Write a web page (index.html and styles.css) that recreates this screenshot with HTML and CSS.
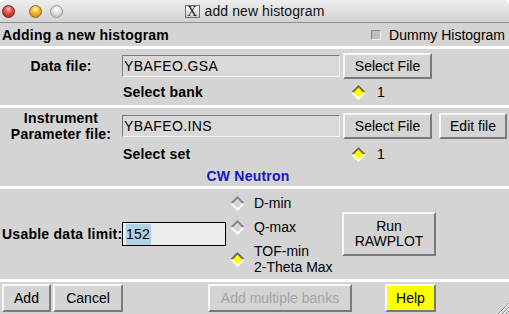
FILE: index.html
```html
<!DOCTYPE html>
<html>
<head>
<meta charset="utf-8">
<title>add new histogram</title>
<link rel="stylesheet" href="styles.css">
</head>
<body>
<div class="window">
  <div class="titlebar">
    <div class="lights">
      <span class="light red"></span>
      <span class="light yellow"></span>
      <span class="light grey"></span>
    </div>
    <div class="title"><span class="xicon">X</span><span>add new histogram</span></div>
    <div></div>
  </div>

  <div class="header">
    <span class="heading">Adding a new histogram</span>
    <span class="check"><span class="box"></span>Dummy Histogram</span>
  </div>

  <div class="sep"></div>

  <div class="files data">
    <div class="lbl">Data file:</div>
    <div class="entry">YBAFEO.GSA</div>
    <div class="btn file-btn">Select File</div>
    <div class="sub">Select bank</div>
    <div class="radio pick">
      <svg viewBox="0 0 16 16"><polygon points="8,1.5 14.5,8 8,14.5 1.5,8" fill="#ffff00"/><polyline points="1.5,8 8,1.5 14.5,8" fill="none" stroke="#6e6a5a" stroke-width="2"/><polyline points="1.5,8 8,14.5 14.5,8" fill="none" stroke="#ffffff" stroke-width="2"/></svg>
      <span class="rtext">1</span>
    </div>
  </div>

  <div class="sep"></div>

  <div class="files inst">
    <div class="lbl">Instrument<br>Parameter file:</div>
    <div class="entry">YBAFEO.INS</div>
    <div class="btn file-btn">Select File</div>
    <div class="btn edit-btn">Edit file</div>
    <div class="sub">Select set</div>
    <div class="radio pick">
      <svg viewBox="0 0 16 16"><polygon points="8,1.5 14.5,8 8,14.5 1.5,8" fill="#ffff00"/><polyline points="1.5,8 8,1.5 14.5,8" fill="none" stroke="#6e6a5a" stroke-width="2"/><polyline points="1.5,8 8,14.5 14.5,8" fill="none" stroke="#ffffff" stroke-width="2"/></svg>
      <span class="rtext">1</span>
    </div>
    <div class="mode">CW Neutron</div>
  </div>

  <div class="sep"></div>

  <div class="limits">
    <div class="limit-label">Usable data limit:</div>
    <div class="entry focus"><span class="selected">152</span></div>
    <div class="radios">
      <div class="radio">
        <svg viewBox="0 0 16 16"><polygon points="8,1.5 14.5,8 8,14.5 1.5,8" fill="#d4d4d4"/><polyline points="1.5,8 8,1.5 14.5,8" fill="none" stroke="#858585" stroke-width="2"/><polyline points="1.5,8 8,14.5 14.5,8" fill="none" stroke="#ffffff" stroke-width="2"/></svg>
        <span class="rtext">D-min</span>
      </div>
      <div class="radio">
        <svg viewBox="0 0 16 16"><polygon points="8,1.5 14.5,8 8,14.5 1.5,8" fill="#d4d4d4"/><polyline points="1.5,8 8,1.5 14.5,8" fill="none" stroke="#858585" stroke-width="2"/><polyline points="1.5,8 8,14.5 14.5,8" fill="none" stroke="#ffffff" stroke-width="2"/></svg>
        <span class="rtext">Q-max</span>
      </div>
      <div class="radio">
        <svg viewBox="0 0 16 16"><polygon points="8,1.5 14.5,8 8,14.5 1.5,8" fill="#ffff00"/><polyline points="1.5,8 8,1.5 14.5,8" fill="none" stroke="#6e6a5a" stroke-width="2"/><polyline points="1.5,8 8,14.5 14.5,8" fill="none" stroke="#ffffff" stroke-width="2"/></svg>
        <span class="rtext">TOF-min<br>2-Theta Max</span>
      </div>
    </div>
    <div class="btn run-btn">Run<br>RAWPLOT</div>
  </div>

  <div class="sep"></div>

  <div class="bottom">
    <div class="btn add-btn">Add</div>
    <div class="btn cancel-btn">Cancel</div>
    <div class="btn multi-btn">Add multiple banks</div>
    <div class="btn help-btn">Help</div>
  </div>

  <svg class="grip" viewBox="0 0 14 14">
    <line x1="3" y1="14" x2="14" y2="3" stroke="#8a8a8a" stroke-width="1"/>
    <line x1="4" y1="14" x2="14" y2="4" stroke="#ffffff" stroke-width="1"/>
    <line x1="7" y1="14" x2="14" y2="7" stroke="#8a8a8a" stroke-width="1"/>
    <line x1="8" y1="14" x2="14" y2="8" stroke="#ffffff" stroke-width="1"/>
    <line x1="11" y1="14" x2="14" y2="11" stroke="#8a8a8a" stroke-width="1"/>
    <line x1="12" y1="14" x2="14" y2="12" stroke="#ffffff" stroke-width="1"/>
  </svg>
</div>
</body>
</html>
```

FILE: styles.css
```css
* { box-sizing: border-box; }
html, body { margin: 0; padding: 0; background: #ffffff; }
body {
  font-family: "Liberation Sans", Arial, sans-serif;
  font-size: 14px;
  color: #000;
}

.window {
  width: 509px;
  height: 314px;
  background: #d4d4d4;
  overflow: hidden;
  position: relative;
  border-radius: 6px 6px 0 0;
  display: flex;
  flex-direction: column;
}

/* title bar */
.titlebar {
  height: 23px;
  flex: none;
  display: grid;
  grid-template-columns: 1fr auto 1fr;
  align-items: center;
  background: linear-gradient(#eeeeee, #d2d2d2);
  border-bottom: 1px solid #8e8e8e;
}
.lights { display: flex; align-items: center; padding-left: 2px; }
.light { width: 13px; height: 13px; border-radius: 50%; flex: none; }
.light.red {
  background: radial-gradient(circle at 50% 30%, #ffc2ba 0, #e5504a 40%, #a3160f 100%);
  border: 1px solid #7e231d;
}
.light.yellow {
  margin-left: 14px;
  background: radial-gradient(circle at 50% 30%, #fff3b8 0, #f4bb33 40%, #b8760a 100%);
  border: 1px solid #9b6a14;
}
.light.grey {
  margin-left: 8px;
  background: radial-gradient(circle at 50% 30%, #ffffff 0, #e0e0e0 45%, #b4b4b4 100%);
  border: 1px solid #9a9a9a;
}
.title { display: flex; align-items: center; gap: 5px; color: #111; letter-spacing: 0.1px; }
.xicon {
  width: 15px;
  height: 13px;
  border: 1px solid #707070;
  background: linear-gradient(#fbfbfb, #cfcfcf);
  font-family: "Liberation Serif", serif;
  font-size: 14px;
  line-height: 11px;
  text-align: center;
  color: #222;
  letter-spacing: 0;
}

/* header */
.header {
  height: 23px;
  flex: none;
  display: flex;
  justify-content: space-between;
  align-items: center;
  padding: 0 4px 0 2px;
}
.heading { font-weight: bold; letter-spacing: 0.2px; }
.check { display: flex; align-items: center; }
.box {
  width: 10px;
  height: 10px;
  border: 1px solid;
  border-color: #8a8a8a #f0f0f0 #f0f0f0 #8a8a8a;
  background: #bebebe;
  margin-right: 8px;
}

.sep { height: 3px; flex: none; background: #ffffff; }

/* file sections */
.files {
  flex: none;
  display: grid;
  grid-template-columns: 122px 221px 96px 68px;
}
.files.data { height: 56px; padding-top: 4px; grid-template-rows: 26px 26px; }
.files.inst { height: 78px; padding-top: 5px; grid-template-rows: 26px 30px 15px; }
.lbl {
  font-weight: bold;
  text-align: center;
  align-self: center;
  line-height: 16px;
  letter-spacing: 0.2px;
}
.entry {
  width: 218px;
  height: 22px;
  align-self: center;
  border: 1px solid;
  border-color: #7b7b7b #f2f2f2 #f2f2f2 #7b7b7b;
  background: #d9d9d9;
  padding-left: 1px;
  line-height: 20px;
  white-space: nowrap;
  letter-spacing: 0.4px;
}
.sub {
  grid-column: 2;
  font-weight: bold;
  align-self: center;
  padding-left: 1px;
  letter-spacing: 0.2px;
}
.pick { grid-column: 3; padding-left: 8px; align-self: center; }
.mode {
  grid-column: 1 / -1;
  text-align: center;
  padding-right: 11px;
  color: #1616c6;
  font-weight: bold;
  line-height: 15px;
  letter-spacing: 0.2px;
}

/* buttons */
.btn {
  display: flex;
  align-items: center;
  justify-content: center;
  text-align: center;
  border: 2px solid;
  border-color: #f7f7f7 #7a7a7a #7a7a7a #f7f7f7;
  background: #d4d4d4;
  line-height: 15px;
  white-space: nowrap;
}
.file-btn { width: 89px; height: 26px; }
.edit-btn { width: 68px; height: 26px; }

/* radios */
.radio { display: flex; align-items: center; line-height: 16px; }
.radio svg { width: 15px; height: 15px; flex: none; }
.pick .rtext { margin-left: 11px; }

/* limits */
.limits {
  height: 90px;
  flex: none;
  display: flex;
  align-items: center;
}
.limit-label {
  width: 122px;
  padding-left: 2px;
  font-weight: bold;
  white-space: nowrap;
  letter-spacing: 0.25px;
}
.entry.focus {
  width: 104px;
  height: 24px;
  border: 1px solid #000;
  background: #ececec;
  padding: 1px 0 0 3px;
  line-height: 21px;
  letter-spacing: 0.2px;
}
.selected { display: inline-block; background: #b0d2e4; height: 21px; padding-right: 1px; }
.radios {
  width: 112px;
  margin-left: 4px;
  padding-top: 2px;
  display: flex;
  flex-direction: column;
}
.radios .radio { padding: 4px 0; }
.radios .rtext { margin-left: 9px; }
.run-btn { width: 94px; height: 44px; }

/* bottom */
.bottom {
  flex: 1;
  display: flex;
  align-items: flex-start;
  padding: 2px 0 0 2px;
}
.bottom .btn { height: 28px; }
.add-btn { width: 49px; }
.cancel-btn { width: 70px; margin-left: 2px; }
.multi-btn { width: 144px; margin-left: 85px; color: #a4a4a4; }
.help-btn { width: 51px; margin-left: 33px; background: #ffff00; }

.grip { position: absolute; right: 0; bottom: 0; width: 14px; height: 14px; }
```
